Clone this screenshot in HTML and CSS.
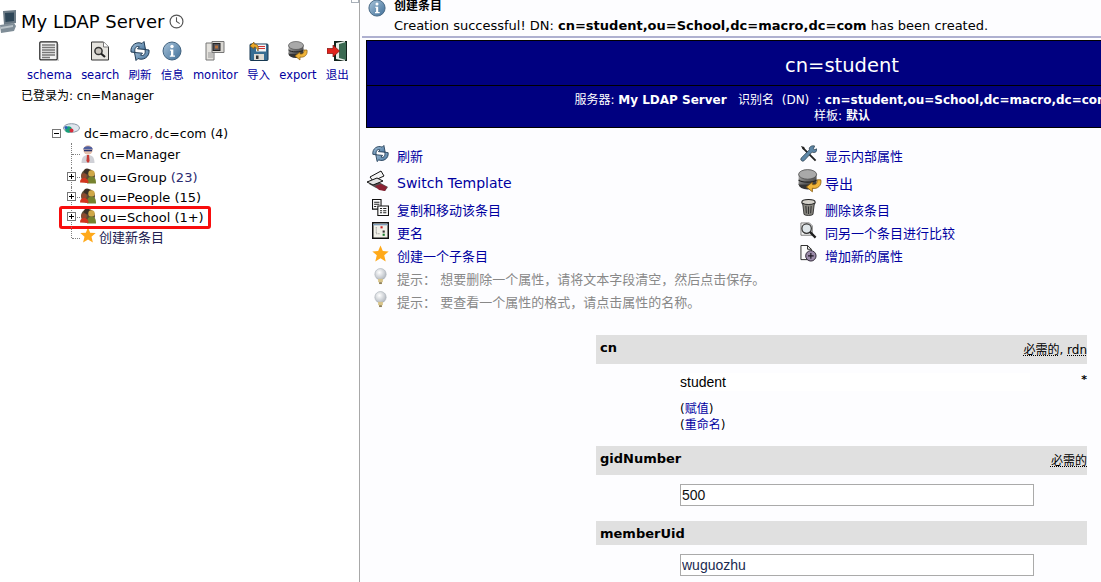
FILE: index.html
```html
<!DOCTYPE html>
<html lang="en">
<head>
  <meta charset="UTF-8">
  <title>My LDAP Server</title>
  <link rel="stylesheet" href="styles.css">
</head>
<body>
  <svg class="defs" aria-hidden="true">
    <defs>
      <linearGradient id="blueBall" x1="0" y1="0" x2="1" y2="1"><stop offset="0" stop-color="#a9c4da"/><stop offset="1" stop-color="#3f6e98"/></linearGradient>
      <linearGradient id="dbGrey" x1="0" y1="0" x2="1" y2="1"><stop offset="0" stop-color="#b5b5b5"/><stop offset="1" stop-color="#2e2e2e"/></linearGradient>
      <radialGradient id="bulb" cx="0.4" cy="0.35" r="0.7"><stop offset="0" stop-color="#fff"/><stop offset="1" stop-color="#aeb4bc"/></radialGradient>

      <symbol id="i-schema" viewBox="0 0 20 20">
        <rect x="0.8" y="0.8" width="17.4" height="18" rx="1" fill="#f1f1f1" stroke="#222" stroke-width="1.2"/>
        <path d="M3 4h13M3 6.500h13M3 9h13M3 11.500h13M3 14h13M3 16.500h8" stroke="#777" stroke-width="1.300"/>
        <path d="M2 20h18V3" fill="none" stroke="#bbb"/>
      </symbol>
      <symbol id="i-search" viewBox="0 0 20 20">
        <path d="M1.500 1h12l5 5v13h-17z" fill="#e6e4df" stroke="#333"/>
        <path d="M13.500 1v5h5" fill="#fff" stroke="#777"/>
        <circle cx="8.500" cy="10" r="3.600" fill="#c9c4bd" stroke="#333" stroke-width="1.500"/>
        <path d="M11 12.500l4 3.500" stroke="#222" stroke-width="2.200"/>
      </symbol>
      <symbol id="i-refresh" viewBox="0 0 20 20">
        <path d="M1 11C0 4 7 0 12 2.500L14 .5l1.500 8-8-.7 2-2C6.500 4.500 4 7 5 11.500z" fill="url(#blueBall)" stroke="#1f3a54"/>
        <path d="M19 9c1 7-6 11-11 8.500L6 19.500l-1.500-8 8 .7-2 2c3 1.300 5.500-1.200 4.500-5.700z" fill="url(#blueBall)" stroke="#1f3a54"/>
      </symbol>
      <symbol id="i-info" viewBox="0 0 20 20">
        <circle cx="10" cy="10" r="9" fill="url(#blueBall)" stroke="#41627f"/>
        <circle cx="10" cy="5.500" r="1.700" fill="#fff"/>
        <path d="M8 8.500h3.300v6H13v1.300H7.800v-1.300h1.200v-4.700H8z" fill="#fff"/>
      </symbol>
      <symbol id="i-monitor" viewBox="0 0 20 20">
        <path d="M1 2h8v17H1z" fill="#e4e2dd" stroke="#777"/>
        <path d="M3 12h5M3 14h5M3 16h5" stroke="#999"/>
        <path d="M7 .5h12v11H7z" fill="#d9d7d2" stroke="#777"/>
        <rect x="8" y="2.500" width="7" height="7" fill="#55555d" stroke="#222"/>
        <rect x="10" y="4.500" width="3" height="3" fill="#b5713c"/>
      </symbol>
      <symbol id="i-import" viewBox="0 0 20 20">
        <rect x="1" y="3" width="18" height="16.500" rx="1" fill="#376d92" stroke="#163750"/>
        <rect x="7" y="3.500" width="10" height="7" fill="#f4f4f4"/>
        <path d="M9 5.500h7M9 7.500h7" stroke="#c33"/>
        <rect x="5" y="13" width="10" height="6" fill="#dfdcd4"/>
        <rect x="7" y="14.500" width="2.500" height="3.500" fill="#333"/>
        <path d="M1 5l4-4v2c4 0 5 3 4 7-1-3-2-4-4-4v2z" fill="#e9a72a" stroke="#7d5510" stroke-width=".7"/>
      </symbol>
      <symbol id="i-db" viewBox="0 0 20 20">
        <ellipse cx="8" cy="13" rx="7.500" ry="4" fill="#333"/>
        <rect x=".5" y="4" width="15" height="9" fill="url(#dbGrey)"/>
        <path d="M.5 9c2 2.500 13 2.500 15 0" fill="none" stroke="#222"/>
        <ellipse cx="8" cy="4.500" rx="7.500" ry="4" fill="#a9a9a9" stroke="#444" stroke-width=".6"/>
        <path d="M19 9c1 5-3 8-7 7v3l-5-4 5-4v2c3 .5 4-1 4-4z" fill="#f0b53a" stroke="#8a5f12" stroke-width=".7"/>
      </symbol>
      <symbol id="i-logout" viewBox="0 0 20 20">
        <path d="M7 0h13v20H7z" fill="#12231c"/>
        <path d="M9 2l9-2v20l-9-2z" fill="#e8efe8"/>
        <path d="M12 3l7-2v18l-7-2z" fill="#3b6a52"/>
        <path d="M0 7.500h6V4l6.500 6L6 16v-3.500H0z" fill="#e0231c" stroke="#7a120e" stroke-width=".7"/>
      </symbol>
      <symbol id="i-computer" viewBox="0 0 17 23">
        <path d="M3 1l13-1v13L4 15z" fill="#6b7a85"/>
        <path d="M5 3l9-.5v8.500L5.500 12z" fill="#2e4657"/>
        <path d="M0 15l14-2 2 3-2 5L1 23z" fill="#7f8d97"/>
        <path d="M1 17l12-2v2L1 19z" fill="#b9c2c8"/>
      </symbol>
      <symbol id="i-clock" viewBox="0 0 14 14">
        <circle cx="7" cy="7" r="6" fill="#fff" stroke="#555" stroke-width="1.100"/>
        <path d="M7 3v4l3 2" fill="none" stroke="#555"/>
      </symbol>
      <symbol id="i-root" viewBox="0 0 18 14">
        <ellipse cx="9.500" cy="5" rx="8" ry="4.300" fill="#dfe6ee" stroke="#8a97a6"/>
        <circle cx="6.500" cy="6.500" r="3.300" fill="#17a079"/>
        <circle cx="9.500" cy="7.500" r="2" fill="#d62c3a"/>
        <circle cx="4" cy="4.500" r="1.500" fill="#2b61b8"/>
      </symbol>
      <symbol id="i-user" viewBox="0 0 16 20">
        <circle cx="8" cy="6" r="4.700" fill="#e5c0ad"/>
        <path d="M3.300 5.500C3 1 13 1 12.700 5.500z" fill="#4e5fa0"/>
        <path d="M4 6h8v1.300H4z" fill="#2b356d"/>
        <path d="M1.500 19c0-6 2.500-8 6.500-8s6.500 2 6.500 8z" fill="#cfd0d6"/>
        <path d="M7 11h2l.6 6-1.600 2-1.600-2z" fill="#c93a33"/>
      </symbol>
      <symbol id="i-people" viewBox="0 0 16 16">
        <circle cx="8" cy="8" r="7" fill="#5a4a32"/>
        <circle cx="7" cy="3.500" r="3" fill="#3c3026"/>
        <circle cx="11.500" cy="5.500" r="3.200" fill="#d0a848"/>
        <path d="M7 15.500c0-5 1.500-7 4.500-7s4.500 2 4.500 7z" fill="#76822f"/>
        <circle cx="4" cy="8" r="2.800" fill="#8c4a2e"/>
        <path d="M0 14.500c0-3 1.500-4.500 4-4.500s4.500 1.500 4.500 5z" fill="#d2351e"/>
      </symbol>
      <symbol id="i-star" viewBox="0 0 16 16">
        <path d="M8 .5l2.200 5.200 5.500.4-4.200 3.600 1.400 5.800L8 12.400l-4.900 3.100 1.400-5.800L.3 6.100l5.500-.4z" fill="#ffa91a"/>
      </symbol>
      <symbol id="i-switch" viewBox="0 0 22 22">
        <path d="M2 14l8-3 11 6-3 4-9-3z" fill="#555"/>
        <path d="M8 16l6-2 6 3-2 4-6-1z" fill="#8c2233"/>
        <path d="M3 7l11-6 3 5-11 5z" fill="#f4f4f4" stroke="#111"/>
        <path d="M0 12l10-4 6 3-10 4z" fill="#e2e2e2" stroke="#111"/>
      </symbol>
      <symbol id="i-copy" viewBox="0 0 16 16">
        <path d="M.5.500h8v9h-8z" fill="#fff" stroke="#111"/>
        <path d="M2 3h5M2 5h5M2 7h2" stroke="#222"/>
        <path d="M5.500 6.500h10v9h-10z" fill="#fff" stroke="#111"/>
        <path d="M7.500 9h2m1 0h3m-6 2h2m1 0h3m-6 2h2m1 0h3" stroke="#222"/>
      </symbol>
      <symbol id="i-rename" viewBox="0 0 16 16">
        <rect x=".7" y=".7" width="14.600" height="14.600" fill="#f2f1e8" stroke="#111" stroke-width="1.400"/>
        <path d="M1 2.500h14" stroke="#7f9db9" stroke-width="1.300"/>
        <path d="M4 5v6h4" fill="none" stroke="#888" stroke-dasharray="1 1"/>
        <rect x="8" y="4" width="2" height="2" fill="#c22"/>
        <rect x="10" y="8" width="2" height="2" fill="#333"/>
        <rect x="10" y="11" width="2" height="2" fill="#1a7f2e"/>
      </symbol>
      <symbol id="i-hint" viewBox="0 0 14 18">
        <circle cx="7" cy="6.500" r="6" fill="url(#bulb)" stroke="#a7adb5" stroke-width=".6"/>
        <path d="M4.500 11.500h5V15h-5z" fill="#d8c489"/>
        <path d="M5.500 15h3v2h-3z" fill="#8e7f55"/>
      </symbol>
      <symbol id="i-tools" viewBox="0 0 18 18">
        <path d="M3 3l13.500 13.500" stroke="#222" stroke-width="2"/>
        <path d="M15.500 1l-1.200 3 1 1 3-1c0 3-3 5-5.500 3.500L4.500 16.500a2 2 0 0 1-3-3L10 5c-1-2.500 2-5 5.500-4z" fill="#5d86a6" stroke="#1c2d3b" stroke-width=".7"/>
        <path d="M1 1l3.500 1L5 5 3 4.500z" fill="#222"/>
      </symbol>
      <symbol id="i-trash" viewBox="0 0 16 16">
        <ellipse cx="8" cy="3" rx="6.300" ry="2.500" fill="#d5d2cb" stroke="#222"/>
        <path d="M2.500 4l1.300 10.500c1 1.300 7.400 1.300 8.400 0L13.500 4c-2 1.600-9 1.600-11 0z" fill="#8c8a83" stroke="#222" stroke-width=".8"/>
        <path d="M5.500 6.500l.5 7M8 7v7M10.500 6.500l-.5 7" stroke="#333"/>
      </symbol>
      <symbol id="i-compare" viewBox="0 0 18 18">
        <path d="M1 1h9l3 3v10H1z" fill="#f3f3f3" stroke="#777"/>
        <circle cx="7" cy="7" r="5" fill="#dfe6ea" stroke="#333" stroke-width="1.300"/>
        <path d="M10.500 10.500l6 6" stroke="#1e1e1e" stroke-width="2.400"/>
      </symbol>
      <symbol id="i-add" viewBox="0 0 18 18">
        <path d="M1 .5h7l4 4v11H1z" fill="#fbfbfb" stroke="#222"/>
        <path d="M8 .5v4h4" fill="none" stroke="#222"/>
        <circle cx="11.500" cy="11.500" r="5.500" fill="#9a8aa8" stroke="#2c2333"/>
        <path d="M8.500 11.500h6M11.500 8.500v6" stroke="#1d1622" stroke-width="1.200"/>
      </symbol>
    </defs>
  </svg>

  <aside class="sidebar">
    <span class="scroll-tick"></span>
    <h1 class="server-title">
      <svg class="computer"><use href="#i-computer"/></svg>
      My LDAP Server
      <svg class="clock"><use href="#i-clock"/></svg>
    </h1>
    <nav class="toolbar">
      <a class="tool" href="#"><svg><use href="#i-schema"/></svg>schema</a>
      <a class="tool" href="#"><svg><use href="#i-search"/></svg>search</a>
      <a class="tool" href="#"><svg><use href="#i-refresh"/></svg>刷新</a>
      <a class="tool" href="#"><svg><use href="#i-info"/></svg>信息</a>
      <a class="tool" href="#"><svg><use href="#i-monitor"/></svg>monitor</a>
      <a class="tool" href="#"><svg><use href="#i-import"/></svg>导入</a>
      <a class="tool" href="#"><svg><use href="#i-db"/></svg>export</a>
      <a class="tool" href="#"><svg><use href="#i-logout"/></svg>退出</a>
    </nav>
    <p class="logged-in">已登录为: cn=Manager</p>

    <div class="tree">
      <div class="root-row">
        <span class="expander minus"></span>
        <svg class="root-icon"><use href="#i-root"/></svg>
        <span>dc=macro<span class="comma">,</span>dc=com (4)</span>
      </div>
      <div class="node node-user">
        <span class="twig"></span>
        <svg class="node-icon user-icon"><use href="#i-user"/></svg>
        <span>cn=Manager</span>
      </div>
      <div class="node">
        <span class="twig"><span class="expander"></span></span>
        <svg class="node-icon"><use href="#i-people"/></svg>
        <span>ou=Group <span class="count">(23)</span></span>
      </div>
      <div class="node">
        <span class="twig"><span class="expander"></span></span>
        <svg class="node-icon"><use href="#i-people"/></svg>
        <span>ou=People (15)</span>
      </div>
      <div class="node node-marked">
        <span class="twig"><span class="expander"></span></span>
        <svg class="node-icon"><use href="#i-people"/></svg>
        <span>ou=School (1+)</span>
      </div>
      <div class="node node-last">
        <span class="twig"></span>
        <svg class="node-icon"><use href="#i-star"/></svg>
        <a class="new-entry" href="#">创建新条目</a>
      </div>
    </div>
  </aside>

  <main class="content">
    <div class="notice">
      <svg class="notice-icon"><use href="#i-info"/></svg>
      <div>
        <div class="notice-title">创建条目</div>
        <div class="notice-text">Creation successful! DN: <b>cn=student,ou=School,dc=macro,dc=com</b> has been created.</div>
      </div>
    </div>
    <hr class="rule">

    <section class="entry-head">
      <h2 class="entry-title">cn=student</h2>
      <div class="entry-meta">
        <div>服务器: <b>My LDAP Server</b> &nbsp; 识别名&nbsp; (DN) &nbsp;: <b>cn=student,ou=School,dc=macro,dc=com</b></div>
        <div>样板: <b>默认</b></div>
      </div>
    </section>

    <div class="actions">
      <a class="action" href="#"><svg><use href="#i-refresh"/></svg>刷新</a>
      <a class="action" href="#"><svg><use href="#i-tools"/></svg>显示内部属性</a>
      <a class="action action-big" href="#"><svg class="switch-icon"><use href="#i-switch"/></svg>Switch Template</a>
      <a class="action action-big" href="#"><svg class="export-icon"><use href="#i-db"/></svg>导出</a>
      <a class="action" href="#"><svg><use href="#i-copy"/></svg>复制和移动该条目</a>
      <a class="action" href="#"><svg><use href="#i-trash"/></svg>删除该条目</a>
      <a class="action" href="#"><svg><use href="#i-rename"/></svg>更名</a>
      <a class="action" href="#"><svg><use href="#i-compare"/></svg>同另一个条目进行比较</a>
      <a class="action" href="#"><svg><use href="#i-star"/></svg>创建一个子条目</a>
      <a class="action" href="#"><svg><use href="#i-add"/></svg>增加新的属性</a>
      <div class="action hint"><svg><use href="#i-hint"/></svg>提示：&nbsp;想要删除一个属性，请将文本字段清空，然后点击保存。</div>
      <div class="action hint"><svg><use href="#i-hint"/></svg>提示：&nbsp;要查看一个属性的格式，请点击属性的名称。</div>
    </div>

    <form class="attrs">
      <div class="attr-head attr-cn">
        <b>cn</b>
        <span class="attr-flags"><u>必需的</u>, <u>rdn</u></span>
      </div>
      <div class="attr-body attr-body-cn">
        <div class="static-value">student</div>
        <span class="star">*</span>
        <div class="attr-links">(<a href="#">赋值</a>)<br>(<a href="#">重命名</a>)</div>
      </div>
      <div class="attr-head attr-gid">
        <b>gidNumber</b>
        <span class="attr-flags"><u>必需的</u></span>
      </div>
      <div class="attr-body">
        <input class="value" type="text" value="500">
      </div>
      <div class="attr-head attr-uid">
        <b>memberUid</b>
      </div>
      <div class="attr-body">
        <input class="value value-uid" type="text" value="wuguozhu">
      </div>
    </form>
  </main>
</body>
</html>
```

FILE: styles.css
```css
html, body {
  margin: 0;
  height: 582px;
  overflow: hidden;
}
body {
  display: flex;
  background: #fff;
  color: #000;
  font-family: "DejaVu Sans", "Noto Sans CJK SC", sans-serif;
  font-size: 12px;
}
a {
  color: #0000a0;
  text-decoration: none;
}
.defs {
  position: absolute;
  width: 0;
  height: 0;
}

/* left frame */
.sidebar {
  position: relative;
  flex: 0 0 359px;
  height: 582px;
  border-right: 1px solid #a8a8a8;
}
.scroll-tick {
  position: absolute;
  top: 0;
  right: 0;
  width: 8px;
  height: 3px;
  border: 1px solid #a8b0b8;
  border-top: 0;
  box-sizing: border-box;
}
.server-title {
  display: flex;
  align-items: center;
  margin: 0;
  padding: 10px 0 0 0;
  height: 23px;
  font-size: 18px;
  font-weight: normal;
  white-space: nowrap;
}
.computer {
  width: 17px;
  height: 23px;
  margin-right: 4px;
}
.clock {
  width: 15px;
  height: 15px;
  margin-left: 5px;
}
.toolbar {
  display: flex;
  gap: 9.200px;
  margin: 8px 0 0 27px;
  font-size: 11.500px;
}
.tool {
  display: flex;
  flex-direction: column;
  align-items: center;
  line-height: 16px;
  white-space: nowrap;
}
.tool svg {
  width: 20px;
  height: 20px;
  margin-bottom: 6px;
}
.logged-in {
  margin: 5px 0 0 21px;
  line-height: 16px;
}
.tree {
  margin: 19px 0 0 52px;
  font-size: 13px;
}
.root-row {
  display: flex;
  align-items: center;
  height: 20px;
  font-size: 12.500px;
}
.root-row .expander {
  margin-right: 1px;
}
.comma {
  color: #c03060;
  margin: 0 1px;
}
.root-icon {
  width: 18px;
  height: 14px;
  margin: -7px 4px 0 0;
}
.expander {
  position: relative;
  display: block;
  flex: none;
  width: 9px;
  height: 9px;
  box-sizing: border-box;
  border: 1px solid #777;
  background: #fff;
  background-image: linear-gradient(#000, #000), linear-gradient(#000, #000);
  background-size: 5px 1px, 1px 5px;
  background-position: center;
  background-repeat: no-repeat;
}
.minus {
  background-size: 5px 1px, 0 0;
}
.node {
  display: flex;
  align-items: center;
  height: 20px;
  margin-left: 19px;
  white-space: nowrap;
}
.node-user {
  height: 22px;
  margin-bottom: 2px;
  font-size: 12.500px;
}
.node-last {
  height: 19px;
}
.twig {
  position: relative;
  display: block;
  flex: none;
  align-self: stretch;
  width: 8px;
  border-left: 1px dotted #808080;
}
.twig::after {
  content: "";
  position: absolute;
  left: 0;
  top: 50%;
  width: 8px;
  border-top: 1px dotted #808080;
}
.twig .expander {
  position: absolute;
  left: -5px;
  top: 5px;
  z-index: 1;
}
.node-last .twig {
  align-self: flex-start;
  height: 11px;
}
.node-last .twig::after {
  top: 100%;
}
.node-icon {
  flex: none;
  width: 16px;
  height: 16px;
  margin: -3px 4px 0 0;
}
.user-icon {
  height: 20px;
  margin-top: 0;
}
.count {
  color: #2a2a70;
}
.new-entry {
  color: #202050;
  margin-left: -1px;
}
.node-marked::after {
  content: "";
  position: absolute;
  left: 59px;
  top: 206px;
  width: 146px;
  height: 17px;
  border: 3px solid #f80d0d;
  border-radius: 3px;
}

/* right frame */
.content {
  flex: none;
  width: 741px;
  height: 582px;
  overflow: hidden;
  background: #fdfdff;
}
.notice {
  display: flex;
  height: 36px;
  padding-left: 8px;
}
.notice-icon {
  width: 18px;
  height: 18px;
  margin: -1px 8px 0 0;
  flex: none;
}
.notice-title {
  font-weight: bold;
  line-height: 12px;
}
.notice-text {
  margin-top: 6px;
  line-height: 16px;
  white-space: nowrap;
  font-size: 13px;
}
.rule {
  height: 2px;
  margin: 0 0 2px 2px;
  border: 0;
  background: #aeb0d0;
}
.entry-head {
  width: 952px;
  margin-left: 6px;
  background: #000080;
  color: #fff;
  text-align: center;
  border: 1px solid #000;
  box-sizing: border-box;
}
.entry-title {
  margin: 0;
  height: 44px;
  line-height: 50px;
  font-size: 19.500px;
  font-weight: normal;
  border-bottom: 1px solid #000;
}
.entry-meta {
  height: 41px;
  padding-top: 6px;
  box-sizing: border-box;
  line-height: 16px;
  white-space: nowrap;
}
.actions {
  display: grid;
  grid-template-columns: 428px 1fr;
  margin: 16px 0 0 12px;
  font-size: 13px;
}
.action {
  display: flex;
  align-items: center;
  height: 23px;
  white-space: nowrap;
}
.action svg {
  flex: none;
  width: 17px;
  height: 17px;
  margin: -5px 8px 0 0;
}
.action-big {
  height: 31px;
  font-size: 14px;
}
.action .switch-icon {
  width: 22px;
  height: 22px;
  margin: -3px 8px 0 -5px;
}
.action .export-icon {
  width: 24px;
  height: 24px;
  margin: -3px 3px 0 -2px;
}
.hint {
  grid-column: 1 / 3;
  color: #888;
}
.attrs {
  width: 491px;
  margin: 22px 0 0 236px;
}
.attr-head {
  display: flex;
  justify-content: space-between;
  align-items: center;
  height: 29px;
  padding: 0 0 0 4px;
  background: #e0e0e0;
  font-size: 13px;
}
.attr-head b {
  margin-top: -5px;
}
.attr-uid {
  height: 24px;
}
.attr-uid b {
  margin-top: 0;
}
.attr-flags {
  font-size: 12px;
  margin-top: -3px;
  white-space: nowrap;
}
.attr-flags u {
  text-decoration: underline dotted;
}
.attr-body {
  position: relative;
  padding: 9px 0 15px 84px;
}
.attr-body-cn {
  height: 82px;
  padding-bottom: 0;
  box-sizing: border-box;
}
.static-value {
  width: 350px;
  height: 18px;
  background: #fff;
  font-family: "Liberation Sans", Arial, sans-serif;
  font-size: 14px;
  line-height: 18px;
}
.star {
  position: absolute;
  right: 0;
  top: 9px;
  font-size: 11px;
  font-weight: bold;
}
.attr-links {
  margin-top: 10px;
  line-height: 16px;
}
.value {
  display: block;
  width: 354px;
  height: 22px;
  margin: 0;
  padding: 0 1px;
  box-sizing: border-box;
  border: 1px solid #aaa;
  font-family: "Liberation Sans", Arial, sans-serif;
  font-size: 14px;
  color: #111;
  background: #fff;
}
.value-uid {
  color: #1a2a50;
}
```
